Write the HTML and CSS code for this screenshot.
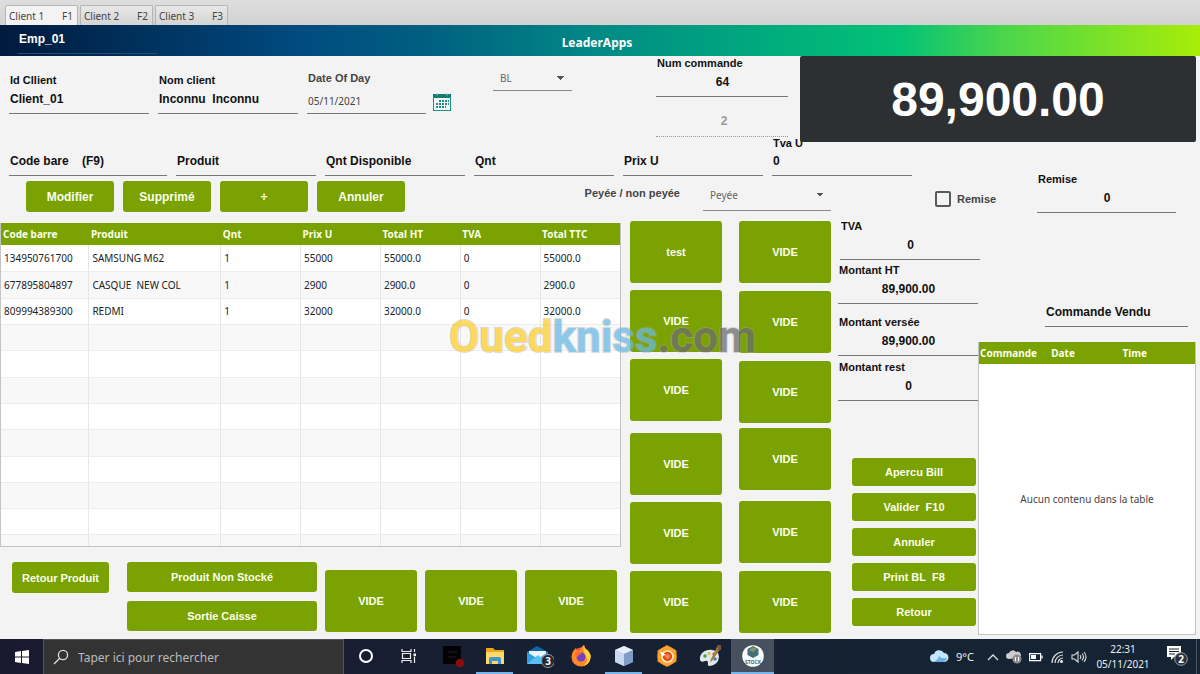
FILE: index.html
```html
<!DOCTYPE html>
<html lang="fr">
<head>
<meta charset="utf-8">
<title>LeaderApps</title>
<link rel="stylesheet" href="styles.css">
</head>
<body>
<nav class="tabs" role="tablist">
  <button class="tab tab-active" role="tab" aria-selected="true"><span>Client 1</span><span>F1</span></button>
  <button class="tab" role="tab"><span>Client 2</span><span>F2</span></button>
  <button class="tab" role="tab"><span>Client 3</span><span>F3</span></button>
</nav>
<header class="banner">
  <input class="employee" aria-label="Employé" value="Emp_01">
  <h1 class="title">LeaderApps</h1>
</header>
<main class="main">
  <section class="client-row">
    <div class="field id-field"><label for="idc">Id Cllient</label><input id="idc" value="Client_01"></div>
    <div class="field id-field"><label for="nom">Nom client</label><input id="nom" value="Inconnu  Inconnu"></div>
    <div class="date">
      <div class="field field-date"><label for="day">Date Of Day</label><input id="day" value="05/11/2021"></div>
      <button class="calendar" aria-label="Choisir une date">
        <svg viewBox="0 0 18 18" width="18" height="18"><rect x=".5" y="2" width="17" height="15.500" fill="#f4f4f4" stroke="#1d9488" stroke-width="1"/><path d="M0 1h18v4H0z" fill="#0f7f74"/><path d="M4 0v2.500M14 0v2.500" stroke="#9fd0ca"/><path d="M6 8h10M3 11h13M3 14h10" stroke="#1d9488" stroke-width="2" stroke-dasharray="2 1"/></svg>
      </button>
    </div>
    <select class="select doc-type" aria-label="Type de document"><option>BL</option></select>
    <div class="order">
      <div class="field centered"><label for="num">Num commande</label><input id="num" value="64"></div>
      <input class="order-index" aria-label="Index" value="2" disabled>
    </div>
    <output class="total">89,900.00</output>
  </section>
  <section class="product-row">
    <div class="field"><input aria-label="Code bare" placeholder="Code bare    (F9)"></div>
    <div class="field"><input aria-label="Produit" placeholder="Produit"></div>
    <div class="field"><input aria-label="Qnt Disponible" placeholder="Qnt Disponible"></div>
    <div class="field"><input aria-label="Qnt" placeholder="Qnt"></div>
    <div class="field"><input aria-label="Prix U" placeholder="Prix U"></div>
    <div class="field"><label for="tvau">Tva U</label><input id="tvau" value="0"></div>
  </section>
  <section class="action-row">
    <button class="btn btn-large">Modifier</button>
    <button class="btn btn-large">Supprimé</button>
    <button class="btn btn-large">+</button>
    <button class="btn btn-large">Annuler</button>
    <label class="pay-label" for="pay">Peyée / non peyée</label>
    <select class="select pay-select" id="pay"><option>Peyée</option></select>
    <label class="check"><input type="checkbox">Remise</label>
    <div class="field centered discount"><label for="rem">Remise</label><input id="rem" value="0"></div>
  </section>
  <section class="work">
    <div class="sale">
      <div class="table-box">
        <table class="table">
          <colgroup><col class="c-code"><col class="c-prod"><col><col><col><col><col></colgroup>
          <thead><tr><th>Code barre</th><th>Produit</th><th>Qnt</th><th>Prix U</th><th>Total HT</th><th>TVA</th><th>Total TTC</th></tr></thead>
          <tbody>
            <tr><td>134950761700</td><td>SAMSUNG M62</td><td>1</td><td>55000</td><td>55000.0</td><td>0</td><td>55000.0</td></tr>
            <tr><td>677895804897</td><td>CASQUE  NEW COL</td><td>1</td><td>2900</td><td>2900.0</td><td>0</td><td>2900.0</td></tr>
            <tr><td>809994389300</td><td>REDMI</td><td>1</td><td>32000</td><td>32000.0</td><td>0</td><td>32000.0</td></tr>
            <tr><td></td><td></td><td></td><td></td><td></td><td></td><td></td></tr>
            <tr><td></td><td></td><td></td><td></td><td></td><td></td><td></td></tr>
            <tr><td></td><td></td><td></td><td></td><td></td><td></td><td></td></tr>
            <tr><td></td><td></td><td></td><td></td><td></td><td></td><td></td></tr>
            <tr><td></td><td></td><td></td><td></td><td></td><td></td><td></td></tr>
            <tr><td></td><td></td><td></td><td></td><td></td><td></td><td></td></tr>
            <tr><td></td><td></td><td></td><td></td><td></td><td></td><td></td></tr>
            <tr><td></td><td></td><td></td><td></td><td></td><td></td><td></td></tr>
            <tr class="partial"><td></td><td></td><td></td><td></td><td></td><td></td><td></td></tr>
          </tbody>
        </table>
      </div>
      <div class="sale-actions">
        <button class="btn return">Retour Produit</button>
        <div class="stack"><button class="btn">Produit Non Stocké</button><button class="btn">Sortie Caisse</button></div>
        <button class="btn tile">VIDE</button>
        <button class="btn tile">VIDE</button>
        <button class="btn tile">VIDE</button>
      </div>
    </div>
    <div class="tiles tiles-left">
      <button class="btn tile">test</button><button class="btn tile">VIDE</button><button class="btn tile">VIDE</button>
      <button class="btn tile group">VIDE</button><button class="btn tile">VIDE</button><button class="btn tile">VIDE</button>
    </div>
    <div class="tiles tiles-right">
      <button class="btn tile">VIDE</button><button class="btn tile">VIDE</button><button class="btn tile">VIDE</button>
      <button class="btn tile near">VIDE</button><button class="btn tile group">VIDE</button><button class="btn tile">VIDE</button>
    </div>
    <div class="amounts">
      <div class="field centered tva"><label for="tva">TVA</label><input id="tva" value="0"></div>
      <div class="field centered"><label for="ht">Montant HT</label><input id="ht" value="89,900.00"></div>
      <div class="field centered paid"><label for="ver">Montant versée</label><input id="ver" value="89,900.00"></div>
      <div class="field centered rest"><label for="rest">Montant rest</label><input id="rest" value="0"></div>
      <div class="bill-actions">
        <button class="btn">Apercu Bill</button>
        <button class="btn">Valider  F10</button>
        <button class="btn">Annuler</button>
        <button class="btn">Print BL  F8</button>
        <button class="btn">Retour</button>
      </div>
    </div>
    <div class="orders">
      <div class="field orders-title"><input aria-label="Commande Vendu" placeholder="Commande Vendu"></div>
      <div class="orders-box">
        <table class="table orders-table">
          <colgroup><col class="o-cmd"><col class="o-date"><col></colgroup>
          <thead><tr><th>Commande</th><th>Date</th><th>Time</th></tr></thead>
        </table>
        <p class="empty">Aucun contenu dans la table</p>
      </div>
    </div>
    <div class="watermark" aria-hidden="true"><span class="wm-a">Oued</span><span class="wm-b">kniss</span><span class="wm-c">.com</span></div>
  </section>
</main>
<footer class="taskbar">
  <button class="start" aria-label="Démarrer"><svg viewBox="0 0 14 14" width="14" height="14"><path fill="#fff" d="M0 2l6-1v5.500H0zM7 .9L14 0v6.500H7zM0 7.500h6V13l-6-1zM7 7.500h7V14l-7-.9z"/></svg></button>
  <label class="search"><svg viewBox="0 0 16 16" width="16" height="16" fill="none" stroke="#ddd" stroke-width="1.300"><circle cx="10" cy="6" r="4.600"/><path d="M6.700 9.300L1 15"/></svg><input aria-label="Rechercher" placeholder="Taper ici pour rechercher"></label>
  <div class="apps">
    <button class="app" aria-label="Cortana"><svg viewBox="0 0 24 24" width="24" height="24"><circle cx="12" cy="12" r="6" fill="none" stroke="#fff" stroke-width="2"/></svg></button>
    <button class="app" aria-label="Affichage des tâches"><svg viewBox="0 0 24 24" width="24" height="24" fill="none" stroke="#eee" stroke-width="1.200"><path d="M5 5v2.500h9V5M5 19v-2.500h9V19M5.500 9.500h8v5h-8zM17.500 5v3M17.500 12.500V19"/><path d="M16.500 9.500h2.500v2.500h-2.500z" fill="#eee" stroke="none"/></svg></button>
    <button class="app" aria-label="Éditeur"><svg viewBox="0 0 24 24" width="24" height="24"><path d="M3 2h18v18H3z" fill="#020204"/><path d="M8 8h9M8 13h8" stroke="#1c2028"/><circle cx="20" cy="19" r="4.300" fill="#8c0c0e"/></svg></button>
    <button class="app open" aria-label="Explorateur"><svg viewBox="0 0 24 24" width="24" height="24"><path d="M3 4h7l2 2h9v13H3z" fill="#e9a820"/><path d="M3 8h18v12H3z" fill="#ffd968"/><path d="M6 20v-5q0-2 2-2h8q2 0 2 2v5h-3v-3H9v3z" fill="#4094d0"/></svg></button>
    <button class="app" aria-label="Courrier, 3 messages"><svg viewBox="0 0 32 24" width="32" height="24"><path d="M5 8l10-6 11 6v12H5z" fill="#0f65a8"/><path d="M7 7h17v8H7z" fill="#e9f6ff"/><path d="M5 8l11 7 10-7v12H5z" fill="#2e9fe5"/><path d="M5 20l11-9 10 9z" fill="#59c0f5"/><circle cx="26" cy="17" r="6.500" fill="#24282e" stroke="#9a9da0"/><text class="badge" x="26" y="21" text-anchor="middle">3</text></svg></button>
    <button class="app" aria-label="Firefox"><svg viewBox="0 0 24 24" width="24" height="24"><circle cx="12" cy="13" r="9.500" fill="#ff4b3c"/><path d="M3 15C2 9 5 6 7 4q0 3 3 3 3-5 5-6 0 3 3 5 5 4 3 10-3 7-10 6-7-1-8-7z" fill="#ff8a24"/><path d="M15 1q0 3 3 5 5 4 3 10-2 5-7 6 6-4 3-10-4-6-2-11z" fill="#ffd43b"/><circle cx="12" cy="13" r="4.500" fill="#7540c4"/><path d="M6 9q4-2 7 1-4 0-4 3-3-1-3-4z" fill="#ff6a2f"/></svg></button>
    <button class="app open" aria-label="NetBeans"><svg viewBox="0 0 24 24" width="24" height="24"><path d="M12 2l9 4v12l-9 4-9-4V6z" fill="#9db4d8"/><path d="M12 2l9 4-9 4-9-4z" fill="#e7eefb"/><path d="M3 6l9 4v12l-9-4z" fill="#c9d8ef"/><path d="M12 10l9-4v12l-9 4z" fill="#7f9cc8"/></svg></button>
    <button class="app" aria-label="Utilitaire"><svg viewBox="0 0 24 24" width="24" height="24"><path d="M12 1l9.500 5.500v11L12 23l-9.500-5.500v-11z" fill="#f19420"/><circle cx="12" cy="12" r="9.500" fill="#f8a332"/><circle cx="12.500" cy="12.500" r="5.500" fill="#e64b1c" stroke="#ffe5b5" stroke-width="1.600"/><circle cx="12.500" cy="12.500" r="2.200" fill="#f08a4c"/><path d="M5 7l6 4-4 1z" fill="#fff"/></svg></button>
    <button class="app" aria-label="Paint"><svg viewBox="0 0 24 24" width="24" height="24"><path d="M2 16C1 9 8 5 14 6q7 1 7 7-1 8-9 9-3 0-2-3 0-3-3-2-4 2-5-1z" fill="#dfe8ea"/><circle cx="7" cy="12" r="1.800" fill="#4f9d4c"/><circle cx="11" cy="9.500" r="1.500" fill="#e4b73c"/><circle cx="16" cy="10" r="1.600" fill="#cf4b3c"/><circle cx="17" cy="15" r="1.700" fill="#3c7dc4"/><path d="M20 1l3 3-9 13-2 1 1-3z" fill="#a9793e"/><path d="M19 1l4 0 0 5-3 0z" fill="#765437"/></svg></button>
    <button class="app open current" aria-label="LeaderApps"><svg viewBox="0 0 24 24" width="24" height="24"><circle cx="12" cy="12" r="10.800" fill="#f8fbfb"/><path d="M12 2l5.500 3v6L12 14l-5.500-3V5z" fill="#456f78"/><path d="M12 3l4 2-4 3-4-2z" fill="#809765"/><text class="app-text" x="12" y="20" text-anchor="middle">STOCK</text></svg></button>
  </div>
  <div class="tray">
    <svg class="weather" viewBox="0 0 20 16" width="20" height="16"><path d="M5 13a4 4 0 010-8 5.500 5.500 0 0110-1 4.500 4.500 0 010 9z" fill="#c4e6fb"/><path d="M4 13q5-2 6-6 2 3 8 2-1 4-4 4z" fill="#69b0e6"/></svg>
    <span class="temp">9°C</span>
    <svg viewBox="0 0 12 12" width="12" height="12"><path d="M1 9l5-5 5 5" fill="none" stroke="#ddd" stroke-width="1.300"/></svg>
    <svg viewBox="0 0 16 14" width="16" height="14"><path d="M3 9a3 3 0 010-6 4 4 0 017-1 3 3 0 013 6z" fill="#ccc"/><circle cx="11" cy="9" r="4.500" fill="#8b8d90"/><path d="M9.500 7v4M12.500 7v4" stroke="#fff"/></svg>
    <svg viewBox="0 0 14 10" width="14" height="10"><path d="M.6 1.600h11v7H.6zM13 3.500v3" fill="none" stroke="#fff" stroke-width="1.200"/><path d="M2 3h5v4H2z" fill="#fff"/></svg>
    <svg viewBox="0 0 14 14" width="14" height="14" fill="none" stroke="#ddd" stroke-width="1.200"><path d="M2 13A11 11 0 0113 2M5 13a8 8 0 018-8M8 13a5 5 0 015-5"/><circle cx="11.500" cy="11.500" r="1" fill="#ddd"/></svg>
    <svg viewBox="0 0 16 14" width="16" height="14" fill="none" stroke="#ddd" stroke-width="1.100"><path d="M1 5h2.500L7 2v10L3.500 9H1zM9 5q1.500 2 0 4M11 3.500q3 3.500 0 7M13 2q4 5 0 10"/></svg>
    <time class="clock"><span>22:31</span><span>05/11/2021</span></time>
    <button class="notify" aria-label="2 notifications"><svg viewBox="0 0 24 24" width="24" height="24"><path d="M3 3h14v11h-7l-3 3v-3H3z" fill="#fff"/><path d="M5 6h10M5 8.500h10M5 11h6" stroke="#1a2636"/><circle cx="17" cy="16" r="6.300" fill="#2c3038" stroke="#999da2"/><text class="badge" x="17" y="20" text-anchor="middle">2</text></svg></button>
  </div>
</footer>
</body>
</html>
```
FILE: styles.css
```css
* { box-sizing: border-box; }
body {
  margin: 0;
  min-height: 100vh;
  display: flex;
  flex-direction: column;
  background: #f3f3f3;
  color: #111;
  font-family: "Liberation Sans", Arial, sans-serif;
  font-size: 11px;
}
button, input, select { font: inherit; color: inherit; margin: 0; min-width: 0; }
button { border: 0; padding: 0; background: none; }

.tabs {
  display: flex;
  align-items: flex-end;
  gap: 2px;
  height: 25px;
  padding-left: 5px;
  background: linear-gradient(#dedede, #d2d2d2);
}
.tab {
  display: flex;
  justify-content: space-between;
  align-items: center;
  width: 73px;
  height: 20px;
  padding: 0 4px 0 3px;
  border: 1px solid #b5b5b5;
  border-bottom: 0;
  border-radius: 2px 2px 0 0;
  background: linear-gradient(#e8e8e8, #d4d4d4);
  color: #444;
  font-family: "Noto Sans", sans-serif;
  font-size: 10px;
}
.tab-active { background: #f3f3f3; }

.banner {
  display: grid;
  grid-template-columns: 1fr auto 1fr;
  align-items: start;
  height: 31px;
  padding: 0 24px 0 18px;
  background: linear-gradient(90deg, #001a3d 0%, #004b80 25%, #006080 36%, #008a86 50%, #00b07b 66%, #04c276 75%, #4ed64a 84%, #a8ed08 100%);
  color: #fff;
}
.employee {
  width: 139px;
  height: 29px;
  padding: 0 0 1px 1px;
  border: 0;
  border-bottom: 1px solid #2f4a68;
  background: none;
  font-weight: bold;
  font-size: 12px;
}
.title { margin: 0; align-self: center; padding-top: 4px; font: bold 12px "Noto Sans", sans-serif; }

.main { flex: 1; }

.field { display: flex; flex-direction: column; justify-content: flex-end; min-width: 0; }
.field label { line-height: 14px; padding-left: 1px; font-weight: bold; white-space: nowrap; }
.field input {
  width: 100%;
  height: 27px;
  padding: 0 0 3px 1px;
  border: 0;
  border-bottom: 1px solid #777;
  background: none;
  font-size: 12px;
  font-weight: bold;
}
.field input::placeholder { color: #111; opacity: 1; }
.centered input { text-align: center; }

.client-row {
  display: grid;
  grid-template-columns: 140fr 140fr 144fr 24fr 79fr 66fr 132fr 399fr;
  column-gap: 9px;
  height: 81px;
  padding: 0 4px 0 9px;
}
.id-field { align-self: start; padding-top: 17px; }
.date { display: flex; align-items: flex-end; align-self: start; gap: 7px; height: 58px; }
.field-date { flex: 1; color: #444; }
.field-date input { height: 25px; padding: 0 0 1px 1px; font: 10px "Noto Sans", sans-serif; }
.field-date label { margin-bottom: 4px; }
.calendar { height: 22px; }

.select {
  appearance: none;
  border: 0;
  border-bottom: 1px solid #888;
  border-radius: 0;
  padding: 0 7px;
  color: #666;
  font: 10px "Noto Sans", sans-serif;
  background-color: transparent;
  background-image: linear-gradient(to bottom right, #555 50%, transparent 50%), linear-gradient(to bottom left, #555 50%, transparent 50%);
  background-position: right 7px center, right 11px center;
  background-size: 4px 4px;
  background-repeat: no-repeat;
}
.doc-type { grid-column: 5; height: 25px; margin-top: 10px; }
.order { grid-column: 7; display: flex; flex-direction: column; }
.order-index {
  width: 100%;
  height: 32px;
  margin-top: 8px;
  padding: 0 0 0 4px;
  border: 0;
  border-bottom: 1px dotted #999;
  background: none;
  color: #999;
  text-align: center;
  font-size: 12px;
  font-weight: bold;
}
.total {
  position: relative;
  z-index: 1;
  display: flex;
  align-items: center;
  justify-content: center;
  height: 86px;
  margin-left: 3px;
  border-radius: 2px;
  background: #2d3032;
  color: #fff;
  font-size: 48px;
  font-weight: bold;
}

.product-row {
  display: grid;
  grid-template-columns: 158fr 140fr 140fr 140fr 140fr 140fr 275fr;
  column-gap: 9px;
  height: 39px;
  padding: 0 4px 0 9px;
}
.product-row input { padding-bottom: 2px; }
.product-row label { line-height: 12px; }

.action-row {
  display: grid;
  grid-template-columns: 88fr 88fr 88fr 88fr 280fr 128fr 188fr 139fr;
  column-gap: 9px;
  height: 43px;
  padding: 0 24px 0 26px;
}
.btn {
  border-radius: 3px;
  background: #7aa202;
  color: #fbffec;
  font-weight: bold;
  white-space: pre;
}
.btn-large { height: 31px; margin-top: 5px; font-size: 12px; }
.pay-label { padding: 11px 14px 0 0; text-align: right; color: #444; font-weight: bold; }
.pay-select { height: 32px; margin-top: 3px; }
.check { display: flex; align-items: center; gap: 6px; height: 45px; padding-left: 95px; color: #444; font-weight: bold; }
.check input { appearance: none; width: 16px; height: 16px; border: 2px solid #5a5a5a; border-radius: 2px; }
.discount { height: 41px; margin-top: -4px; }

.work {
  position: relative;
  display: grid;
  grid-template-columns: 621fr 101fr 109fr 147fr 218fr;
  height: 420px;
  padding-right: 4px;
}
.sale { display: flex; flex-direction: column; padding-top: 4px; }
.table-box { border: 1px solid #c4c4c4; border-top: 0; }
.table { width: 100%; table-layout: fixed; border-collapse: collapse; font-family: "Noto Sans", sans-serif; font-size: 10px; }
.table th { height: 22px; padding: 0 0 0 2px; background: #7aa202; color: #fbffec; text-align: left; }
.orders-table th { padding-left: 1px; }
.table td { height: 26px; padding: 0 0 0 3px; border-right: 1px solid #e6e6e6; border-bottom: 1px solid #ececec; background: #fff; color: #222; white-space: pre; }
.table tr:nth-child(even) td { background: #f8f8f8; }
.table tr:nth-child(3n + 2) td { height: 27px; }
.table tr:nth-child(11) td { height: 26px; }
.table tr.partial:last-child td { height: 12px; border-bottom: 0; }
.table td:last-child { border-right: 0; }
.c-code { width: 14.2%; }
.c-prod { width: 21.3%; }

.sale-actions {
  display: grid;
  grid-template-columns: 97fr 200fr 92fr 92fr 92fr;
  column-gap: 8px;
  padding: 15px 4px 0 12px;
}
.return { height: 31px; }
.stack { display: grid; grid-auto-rows: 30px; gap: 9px; padding-left: 10px; }
.sale-actions .tile { margin-top: 8px; }
.tile { height: 62px; }
.tiles { display: flex; flex-direction: column; padding-top: 2px; }
.tiles-left { gap: 7px; padding-left: 9px; }
.tiles-left .group { margin-top: 5px; }
.tiles-right { gap: 8px; padding-left: 17px; }
.tiles-right .near { margin-top: -3px; }
.tiles-right .group { margin-top: 3px; }

.amounts { display: flex; flex-direction: column; gap: 3px; padding-left: 7px; }
.amounts .tva { margin: 0 -2px 0 2px; }
.amounts .paid { margin-top: 8px; }
.amounts .rest { margin-top: 1px; }
.bill-actions { display: grid; grid-auto-rows: 28px; gap: 7px; padding: 54px 2px 0 14px; }

.orders { display: flex; flex-direction: column; }
.orders-title { margin: 80px 8px 0 67px; }
.orders-title input { height: 28px; padding-bottom: 2px; }
.orders-box { display: flex; flex-direction: column; height: 293px; margin-top: 15px; border: 1px solid #c4c4c4; border-top: 0; background: #fff; }
.o-cmd { width: 33%; }
.o-date { width: 33%; }
.empty { margin: auto; color: #444; font: 10px "Noto Sans", sans-serif; }

.watermark {
  position: absolute;
  top: 92px;
  left: 449px;
  line-height: 52px;
  font-family: Roboto, sans-serif;
  font-size: 44px;
  font-weight: bold;
  opacity: 0.75;
  pointer-events: none;
  paint-order: stroke fill;
  -webkit-text-stroke: 2px #aaa8;
}
.wm-a { color: #fdcf2f; }
.wm-b { color: #69b9e4; }
.wm-c { color: #6d6d6d; }

.taskbar {
  display: flex;
  align-items: stretch;
  height: 35px;
  background: linear-gradient(90deg, #1a1930, #162233 60%, #152434);
  color: #eee;
  font-family: "Noto Sans", sans-serif;
}
.start { width: 43px; }
.start svg, .app svg { display: block; margin: auto; }
.search {
  flex: 0 1 301px;
  display: flex;
  align-items: center;
  gap: 9px;
  padding-left: 9px;
  border: 1px solid #555;
  border-bottom: 0;
  background: #333;
}
.search input { flex: 1; border: 0; padding: 0; background: none; font-size: 12px; }
.search input::placeholder { color: #bbb; opacity: 1; }
.apps { display: flex; }
.app { width: 43px; border-bottom: 2px solid transparent; }
.open { border-image: linear-gradient(90deg, transparent 10%, #76b5ea 10%, #76b5ea 90%, transparent 90%) 1; border-width: 0 0 2px; border-style: solid; }
.current { background: #46505e; border-image: none; border-bottom-color: #76b5ea; }
.badge { fill: #fff; font: bold 10px "Noto Sans", sans-serif; }
.app-text { fill: #28718e; font: bold 5px "Noto Sans", sans-serif; }
.tray { display: flex; align-items: center; gap: 7px; margin-left: auto; padding-right: 3px; }
.temp { padding-right: 6px; font-size: 11px; }
.clock { display: grid; width: 58px; text-align: center; font-size: 10px; line-height: 15px; }
.notify { width: 38px; height: 100%; padding-right: 4px; border-right: 1px solid #4b5562; }
```
